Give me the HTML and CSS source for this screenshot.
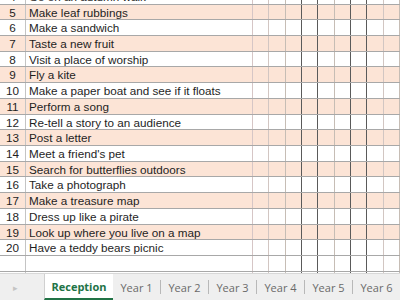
FILE: index.html
```html
<!DOCTYPE html>
<html lang="en">
<head>
  <meta charset="UTF-8">
  <title>Challenges</title>
  <link rel="stylesheet" href="styles.css">
</head>
<body>
  <div class="sheet">
    <div class="grid" id="grid"></div>
  </div>
  <div class="tabs">
    <span class="scroll">&#9656;</span>
    <span class="tab active">Reception</span>
    <span class="tab">Year 1</span>
    <span class="sep"></span>
    <span class="tab">Year 2</span>
    <span class="sep"></span>
    <span class="tab">Year 3</span>
    <span class="sep"></span>
    <span class="tab">Year 4</span>
    <span class="sep"></span>
    <span class="tab">Year 5</span>
    <span class="sep"></span>
    <span class="tab">Year 6</span>
  </div>
  <script>
    const items = [
      'Go on an autumn walk',
      'Make leaf rubbings',
      'Make a sandwich',
      'Taste a new fruit',
      'Visit a place of worship',
      'Fly a kite',
      'Make a paper boat and see if it floats',
      'Perform a song',
      'Re-tell a story to an audience',
      'Post a letter',
      "Meet a friend's pet",
      'Search for butterflies outdoors',
      'Take a photograph',
      'Make a treasure map',
      'Dress up like a pirate',
      'Look up where you live on a map',
      'Have a teddy bears picnic',
      '',
      ''
    ];
    const lineKinds = ['light', 'mid', 'dark', 'dark', 'mid', 'dark', 'dark', 'light', 'mid'];

    const grid = document.getElementById('grid');
    items.forEach((text, i) => {
      const row = document.createElement('div');
      row.className = 'row';
      if (text && i % 2 === 1) row.classList.add('shaded');

      const num = document.createElement('div');
      num.className = 'cell num';
      num.textContent = text ? i + 4 : '';
      row.appendChild(num);

      const task = document.createElement('div');
      task.className = 'cell task';
      task.textContent = text;
      row.appendChild(task);

      lineKinds.forEach(kind => {
        const box = document.createElement('div');
        box.className = 'cell box ' + kind;
        row.appendChild(box);
      });
      grid.appendChild(row);
    });
  </script>
</body>
</html>
```

FILE: styles.css
```css
body {
  margin: 0;
  width: 400px;
  height: 300px;
  overflow: hidden;
  font-family: "Liberation Sans", Arial, sans-serif;
  background: #fff;
  display: flex;
  flex-direction: column;
}
.sheet {
  height: 273px;
  overflow: hidden;
}
.grid {
  margin-top: -11.2px;
}
.row {
  display: grid;
  grid-template-columns: 26px 227px repeat(9, 1fr);
  height: 15.72px;
  border-bottom: 1px solid #a8a8a8;
  box-sizing: border-box;
}
.row.shaded {
  background-color: #fce4d6;
}
.cell {
  font-size: 11.7px;
  line-height: 16px;
  color: #1e1e1e;
  white-space: nowrap;
  overflow: hidden;
}
.num {
  text-align: center;
  border-right: 1px solid #c4c4c4;
}
.task {
  padding-left: 3px;
  border-right: 1px solid #d6c6c6;
}
.box {
  border-right: 1px solid #555;
}
.box.light {
  border-right-color: #d2c6c2;
}
.box.mid {
  border-right-color: #c6bdb5;
}
.box.dark {
  border-right-color: #5a5a5a;
}
.tabs {
  flex: 1;
  display: flex;
  align-items: stretch;
  background: #efefef;
  border-top: 1px solid #d8d8d8;
  font-family: "Open Sans", "Noto Sans", sans-serif;
  font-size: 11px;
  color: #6a6a6a;
  white-space: nowrap;
}
.scroll {
  width: 44px;
  flex-shrink: 0;
  display: flex;
  align-items: center;
  justify-content: center;
  color: #c4c4c4;
  font-size: 9px;
  padding-right: 14px;
  box-sizing: border-box;
}
.tab {
  width: 47px;
  flex-shrink: 0;
  display: flex;
  align-items: center;
  justify-content: center;
}
.tab.active {
  background: #fff;
  color: #217346;
  font-weight: bold;
  border-left: 1px solid #d0d0d0;
  border-bottom: 2px solid #217346;
  width: 69px;
  box-sizing: border-box;
}
.sep {
  width: 1px;
  flex-shrink: 0;
  background: #b8b8b8;
  margin: 6px 0;
}
```
